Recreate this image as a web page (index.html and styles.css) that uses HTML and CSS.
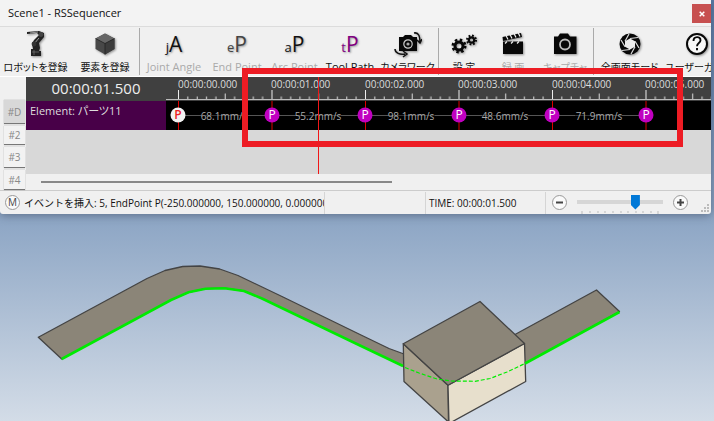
FILE: index.html
```html
<!DOCTYPE html>
<html lang="ja">
<head>
<meta charset="utf-8">
<title>Scene1 - RSSequencer</title>
<link rel="stylesheet" href="styles.css">
</head>
<body>
<main class="viewport">
  <section class="window">
    <header class="titlebar">
      <h1 class="title">Scene1 - RSSequencer</h1>
      <button class="close" type="button" aria-label="Close"><svg width="6" height="6" viewBox="0 0 6 6"><path d="M.7.7l4.6 4.6M5.3.7L.7 5.3" stroke="#fff" stroke-width="1.5"/></svg></button>
    </header>

    <nav class="toolbar">
      <div class="group group-register">
        <button class="tool" type="button">
          <svg class="icon" viewBox="0 0 28 28"><path d="M5 2l12-1 5 2v4l-5 6 1 5-1 3h2v5H9v-7h2l-1-5 2-4 5-5-2-2-10 1z" fill="#222"/><path d="M8 3l8-1M12 14l5-6" stroke="#999" stroke-width="1"/><circle cx="19" cy="4.500" r="2.400" fill="#444"/><circle cx="12" cy="14" r="2.400" fill="#333"/><path d="M10 22h7M12 20v5" stroke="#777" stroke-width=".7"/></svg>
          <span>ロボットを登録</span>
        </button>
        <button class="tool" type="button">
          <svg class="icon" viewBox="0 0 28 28"><path d="M14 3.500l9.500 5v10.500l-9.500 5.500-9.500-5.500V8.500z" fill="#484848"/><path d="M14 3.500l9.500 5-9.500 5-9.500-5z" fill="#666"/><path d="M14 13.500l9.500-5v10.500l-9.500 5.500z" fill="#3c3c3c"/><path d="M4.500 8.500l9.500 5 9.500-5M14 13.500v11" fill="none" stroke="#222" stroke-width=".8"/></svg>
          <span>要素を登録</span>
        </button>
      </div>
      <div class="group group-points">
        <button class="tool off" type="button"><b class="mark"><i>j</i>A</b><span>Joint Angle</span></button>
        <button class="tool off" type="button"><b class="mark gray"><i>e</i>P</b><span>End Point</span></button>
        <button class="tool off" type="button"><b class="mark"><i>a</i>P</b><span>Arc Point</span></button>
        <button class="tool" type="button"><b class="mark violet"><i>t</i>P</b><span>Tool Path</span></button>
        <button class="tool" type="button">
          <svg class="icon" viewBox="0 0 28 28"><path d="M5 7h4l2-2h6l2 2h4v14H5z" fill="#080808"/><circle cx="14" cy="14" r="4.200" fill="none" stroke="#ccc" stroke-width="1.200"/><circle cx="14" cy="14" r="1.600" fill="#aaa"/><path d="M20 3c5-1 6 4 6 9M23 10l3 3 2-4M1 19c0 4 5 6 10 5M9 21l4 3-4 3" fill="none" stroke="#111" stroke-width="1.500"/></svg>
          <span class="kana">カメラワーク</span>
        </button>
      </div>
      <div class="group group-media">
        <button class="tool" type="button">
          <svg class="icon" viewBox="0 0 28 28"><g fill="none" stroke="#080808"><circle cx="9" cy="16" r="4" stroke-width="3"/><circle cx="9" cy="16" r="6.200" stroke-width="2.600" stroke-dasharray="2.430 2.440"/><circle cx="21.500" cy="10" r="2.700" stroke-width="2.200"/><circle cx="21.500" cy="10" r="4.500" stroke-width="2" stroke-dasharray="1.760 1.770"/></g></svg>
          <span>設 定</span>
        </button>
        <button class="tool off" type="button">
          <svg class="icon" viewBox="0 0 28 28"><path d="M4 11.500h20v12.500H4z" fill="#080808"/><path d="M3.500 7l18.500-4 1 4-19 4z" fill="#080808"/><path d="M7 5.500l2 4M11 4.500l2 4M15 3.500l2 4M19 2.500l2 4M6 13.500l2-2M12 13.500l2-2M18 13.500l2-2" stroke="#eee" stroke-width="1.200"/></svg>
          <span>録 画</span>
        </button>
        <button class="tool off" type="button">
          <svg class="icon" viewBox="0 0 28 28"><path d="M3 6.500h4l2-3h8l2 3h6.500V24H3z" fill="#080808"/><circle cx="14" cy="14.500" r="5" fill="none" stroke="#bbb" stroke-width="1.800"/></svg>
          <span class="kana">キャプチャ</span>
        </button>
      </div>
      <div class="group group-view">
        <button class="tool" type="button">
          <svg class="icon" viewBox="0 0 28 28"><circle cx="14" cy="14" r="10.500" fill="#080808"/><path d="M14 8.500l5 2.700v5.600L14 19.500l-5-2.700v-5.600z" fill="#eee"/><path d="M14 8.500l8-1M19 11.200L23 18M19 16.800L15 24M14 19.500l-8 1M9 16.800L5 10M9 11.200L13 4" stroke="#ddd" stroke-width="1.200"/></svg>
          <span class="kana">全画面モード</span>
        </button>
        <button class="tool" type="button">
          <svg class="icon" viewBox="0 0 28 28"><circle cx="14" cy="14" r="10" fill="#f8f8f8" stroke="#080808" stroke-width="2"/><path d="M10.500 11c0-5 7-5 7-.8 0 2.800-3.500 2.800-3.500 6M14 18v2.200" fill="none" stroke="#080808" stroke-width="1.900"/></svg>
          <span class="guide">ユーザーガ</span>
        </button>
      </div>
    </nav>

    <section class="sequencer">
      <div class="rows">
        <button class="row current" type="button">#D</button>
        <button class="row" type="button">#2</button>
        <button class="row" type="button">#3</button>
        <button class="row" type="button">#4</button>
      </div>
      <div class="timeline">
        <output class="clock">00:00:01.500</output>
        <svg class="ruler" viewBox="0 0 545 24" preserveAspectRatio="xMinYMin slice">
          <defs>
            <pattern id="ticks" x="12" width="93.500" height="24" patternUnits="userSpaceOnUse">
              <path d="M.5 13v10" stroke="#eee"/>
              <path d="M9.800 19.500v3.500M19.200 19.500v3.500M28.500 19.500v3.500M37.900 19.500v3.500M47.200 16.500v6.500M56.600 19.500v3.500M65.900 19.500v3.500M75.300 19.500v3.500M84.600 19.500v3.500" stroke="#ddd"/>
            </pattern>
          </defs>
          <rect x="12" width="533" height="24" fill="url(#ticks)"/>
          <path d="M0 22.500h545" stroke="#bbb"/>
          <g class="times">
            <text x="12" y="11">00:00:00.000</text><text x="105" y="11">00:00:01.000</text><text x="199" y="11">00:00:02.000</text><text x="292" y="11">00:00:03.000</text><text x="386" y="11">00:00:04.000</text><text x="479" y="11">00:00:05.000</text>
          </g>
        </svg>
        <div class="element">Element: パーツ11</div>
        <svg class="track" viewBox="0 0 545 30" preserveAspectRatio="xMinYMin slice">
          <path d="M12 14.500h23M82 14.500h47M175 14.500h47M269 14.500h47M362 14.500h47M456 14.500h24" stroke="#555"/>
          <path d="M35 14.500h47M129 14.500h46M222 14.500h47M316 14.500h46M409 14.500h47" stroke="#333"/>
          <path d="M12.500 0v30M106 0v30M199.500 0v30M293 0v30M386.500 0v30M480 0v30" stroke="#d00"/>
          <g class="speeds">
            <text x="58" y="19">68.1mm/s</text><text x="152" y="19">55.2mm/s</text><text x="245" y="19">98.1mm/s</text><text x="339" y="19">48.6mm/s</text><text x="433" y="19">71.9mm/s</text>
          </g>
          <circle cx="12" cy="14" r="7.500" fill="#f2f2f2"/>
          <g fill="#c000c0"><circle cx="106" cy="14" r="7.500"/><circle cx="199" cy="14" r="7.500"/><circle cx="293" cy="14" r="7.500"/><circle cx="386" cy="14" r="7.500"/><circle cx="480" cy="14" r="7.500"/></g>
          <g class="events"><text class="first" x="12" y="18">P</text><text x="106" y="18">P</text><text x="199" y="18">P</text><text x="293" y="18">P</text><text x="386" y="18">P</text><text x="480" y="18">P</text></g>
        </svg>
        <div class="empty"></div>
        <div class="scroll"><div class="thumb"></div></div>
        <div class="playhead"></div>
      </div>
      <div class="highlight"></div>
    </section>

    <footer class="status">
      <button class="round" type="button">M</button>
      <span class="message">イベントを挿入: 5, EndPoint P(-250.000000, 150.000000, 0.000000</span>
      <span class="gap"></span>
      <span class="time">TIME: 00:00:01.500</span>
      <div class="zoom">
        <button class="round" type="button" aria-label="Zoom out"><svg width="9" height="9" viewBox="0 0 9 9"><path d="M1 4.500h7" stroke="#444" stroke-width="2"/></svg></button>
        <div class="slider">
          <input type="range" min="0" max="10" value="7" aria-label="Zoom">
          <svg viewBox="0 0 85 3" height="3"><path d="M4.500 0v3M12.500 0v2M20.500 0v2M27.500 0v2M35.500 0v2M43.500 0v2M50.500 0v2M58.500 0v2M65.500 0v2M73.500 0v2M80.500 0v3" stroke="#bbb"/></svg>
        </div>
        <button class="round" type="button" aria-label="Zoom in"><svg width="9" height="9" viewBox="0 0 9 9"><path d="M1 4.500h7M4.500 1v7" stroke="#444" stroke-width="2"/></svg></button>
      </div>
      <svg class="grip" width="9" height="9" viewBox="0 0 9 9"><path d="M7 0h2v2H7zM7 3h2v2H7zM4 3h2v2H4zM7 6h2v2H7zM4 6h2v2H4zM1 6h2v2H1z" fill="#bbb"/></svg>
    </footer>
  </section>

  <svg class="scene" viewBox="0 214 714 207" preserveAspectRatio="xMidYMin slice">
    <g stroke="#444" stroke-width="1.300" stroke-linejoin="round">
      <path d="M61.700 359L38.300 337.300 147 278.500 165 270.500 182.700 266.500 200 266 219.700 269 238 275.500 283 297 360 334.500 389 348.500 404 354V366.500L360 345.500 262 298.500 244 291 224.500 288.200 205.500 288.700 188.500 292.300 171 300z" fill="#8b8578"/>
      <path d="M515 334.500L596.500 290 619.500 311.500 525 363.500z" fill="#8b8578"/>
      <path d="M403.300 343.700L448 385.300 448.500 422 404 381.500z" fill="#aaa18e"/>
      <path d="M448 385.300L524.500 343.500 525.700 381.500 449 423.500z" fill="#e7dfcc"/>
      <path d="M403.300 343.700L480 301.500 524.500 343.500 448 385.300z" fill="#8b8578"/>
    </g>
    <g fill="none" stroke="#00eb00">
      <path d="M61.700 359L171 300 188.500 292.300 205.500 288.700 224.500 288.200 244 291 262 298.500 360 345.500 403 366M525 363.500L619.500 312" stroke-width="2.600"/>
      <path d="M405 367.500L419 373 437 379 451 381 475 381.300 490 378.500 507 372 525 363.500" stroke-width="1.200" stroke-dasharray="4 2"/>
    </g>
  </svg>
</main>
</body>
</html>
```
FILE: styles.css
```css
* { box-sizing: border-box; }

body {
  margin: 0;
  font-family: "Open Sans", "Noto Sans CJK JP", sans-serif;
  color: #111;
}

button {
  margin: 0;
  padding: 0;
  border: 0;
  background: none;
  font: inherit;
  color: inherit;
}

.viewport {
  display: flex;
  flex-direction: column;
  min-height: 100vh;
  background: linear-gradient(#5b7ca8 0%, #90a8c6 54%, #d3dce7 100%);
}

.window {
  margin-right: 3px;
  background: #f0f0f0;
  border-radius: 0 0 3px 3px;
  box-shadow: 0 1px 10px rgba(40, 50, 70, 0.5);
}

.titlebar {
  display: flex;
  justify-content: space-between;
  align-items: center;
  height: 26px;
  padding-left: 8px;
  background: #f3f3f3;
}

.title {
  margin: 0;
  font-size: 11px;
  font-weight: 400;
  line-height: 24px;
}

.close {
  display: grid;
  place-items: center;
  align-self: flex-start;
  width: 19px;
  height: 19px;
  margin-top: 4px;
  background: #c75050;
}

.toolbar {
  display: flex;
  height: 50px;
  overflow: hidden;
  border-top: 1px solid #dcdcdc;
}

.group {
  display: grid;
  flex: none;
  margin: 1px 0;
  border-right: 1px solid #aaa;
}

.group-register { grid-template-columns: 71px 68px; }
.group-points { grid-template-columns: 68px 58px 57px 54px 61px; }
.group-media { grid-template-columns: 50px 48px 56px; }
.group-view { grid-template-columns: 71px 64px; border-right: 0; }

.tool {
  display: flex;
  flex-direction: column;
  align-items: center;
  font-size: 10px;
  line-height: 14px;
  white-space: nowrap;
  font-feature-settings: "palt";
}

.group-points .tool { font-size: 11px; }
.tool .kana { font-size: 10px; }
.tool.off span { color: #aaa; }

.guide {
  align-self: flex-start;
}

.icon {
  flex: none;
  width: 28px;
  height: 28px;
  margin: 2px 0;
  filter: drop-shadow(1px 1px 1px rgba(0, 0, 0, 0.4));
}

.mark {
  height: 28px;
  margin: 2px 0;
  font-size: 21px;
  font-weight: 400;
  line-height: 28px;
  text-shadow: 1px 1px 2px #999;
}

.mark i {
  font-size: 13px;
  font-style: normal;
}

.gray { color: #444; }
.violet { color: #800080; }

.sequencer {
  position: relative;
  display: grid;
  grid-template-columns: 26px 1fr;
  border-top: 1px solid #fff;
}

.rows {
  display: grid;
  grid-template-rows: 24px 19px 21px 20px;
  gap: 2px;
  padding: 23px 1px 0 4px;
}

.row {
  border-bottom: 1px solid #777;
  background: #f2f2f2;
  box-shadow: 0 0 1px #999;
  color: #888;
  font-size: 10px;
}

.row.current { background: #d8d8d8; }

.timeline {
  position: relative;
  display: grid;
  grid-template-columns: 140px 1fr;
  grid-template-rows: 24px 29px 44px 16px;
  overflow: hidden;
}

.clock {
  background: #404040;
  color: #eee;
  font-size: 15px;
  line-height: 22px;
  text-align: center;
}

.ruler,
.track {
  display: block;
  width: 100%;
  height: 100%;
  background: #404040;
}

.track { background: #000; }

.ruler text {
  fill: #ddd;
  font-size: 10px;
}

.speeds text {
  fill: #aaa;
  font-size: 10px;
  text-anchor: middle;
}

.events text {
  fill: #fff;
  font-size: 12px;
  text-anchor: middle;
}

.events .first {
  fill: #e22;
  font-weight: 600;
}

.element {
  padding-left: 4px;
  background: #480048;
  color: #ddd;
  font-size: 11px;
  line-height: 20px;
  font-feature-settings: "palt";
}

.empty {
  grid-column: 1 / -1;
  background: #d8d8d8;
}

.scroll {
  grid-column: 1 / -1;
  padding: 7px 15px;
}

.thumb {
  width: 351px;
  height: 2px;
  background: #888;
}

.playhead {
  position: absolute;
  top: 0;
  bottom: 16px;
  left: 292px;
  width: 1px;
  background: #f01818;
}

.highlight {
  position: absolute;
  top: -9px;
  left: 242px;
  width: 441px;
  height: 79px;
  border: 6px solid #ed1c24;
}

.status {
  display: flex;
  align-items: center;
  height: 24px;
  padding: 0 2px 0 5px;
  border-top: 1px solid #ccc;
  font-size: 10px;
}

.round {
  display: grid;
  flex: none;
  place-items: center;
  width: 15px;
  height: 15px;
  border: 1px solid #999;
  border-radius: 50%;
  background: #fafafa;
  color: #444;
  line-height: 13px;
}

.message,
.gap,
.time {
  height: 22px;
  overflow: hidden;
  border-right: 1px solid #d5d5d5;
  line-height: 22px;
  white-space: nowrap;
}

.message {
  flex: none;
  width: 305px;
  padding-left: 4px;
}

.gap { flex: 1; }

.time {
  width: 120px;
  padding-left: 3px;
}

.zoom {
  display: flex;
  align-items: center;
  gap: 10px;
  padding-left: 6px;
}

.slider {
  display: grid;
  width: 86px;
  padding-top: 2px;
}

.slider svg {
  width: 100%;
}

.slider input {
  width: 100%;
  height: 17px;
  margin: 0;
  appearance: none;
  background: linear-gradient(#d6d6d6, #d6d6d6) center 6px / 100% 4px no-repeat;
}

.slider input::-webkit-slider-thumb {
  appearance: none;
  width: 9px;
  height: 15px;
  background: #0078d7;
  clip-path: polygon(0 0, 100% 0, 100% 70%, 50% 100%, 0 70%);
}

.grip {
  align-self: flex-end;
  margin: 0 0 1px 12px;
}

.scene {
  display: block;
  flex: 1;
  width: 100%;
  min-height: 0;
}
```
